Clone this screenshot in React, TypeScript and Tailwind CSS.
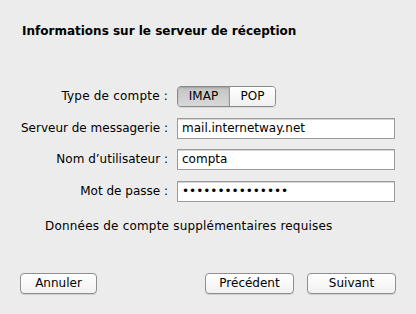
const labelCls = 'text-right leading-[21px] whitespace-nowrap';

function Field({ value }: { value: string }) {
  return (
    <div className="h-[21px] w-[218px] border border-[#9b9b9b] bg-white shadow-[inset_0_1px_0_#d4d4d4] pl-[4px] leading-[19px] whitespace-nowrap overflow-hidden">
      {value}
    </div>
  );
}

function PushButton({ label, width }: { label: string; width: string }) {
  return (
    <button
      type="button"
      className={`${width} h-[21px] rounded-[4px] border border-[#8f8f8f] bg-gradient-to-b from-white to-[#f1f1f1] shadow-[0_1px_0_rgba(0,0,0,0.12)] leading-[19px] text-black`}
    >
      {label}
    </button>
  );
}

export default function App() {
  return (
    <div className="w-[416px] h-[314px] bg-[#ececec] font-['DejaVu_Sans',sans-serif] text-[12px] text-black flex flex-col">
      <p className="pl-[22px] pt-[23px] font-bold text-[12px] leading-[16px]">
        Informations sur le serveur de réception
      </p>

      <div className="mt-[47px] grid grid-cols-[148px_218px] gap-x-[9px] pl-[20px]">
        <span className={`${labelCls} tracking-[0.2px]`}>Type de compte :</span>
        <div className="flex h-[21px] w-[99px] rounded-[4px] border border-[#8a8a8a] overflow-hidden shadow-[0_1px_0_rgba(0,0,0,0.08)]">
          <div className="w-[52px] text-center leading-[19px] bg-gradient-to-b from-[#c4c4c4] to-[#d9d9d9] shadow-[inset_0_1px_2px_rgba(0,0,0,0.2)] border-r border-[#9a9a9a]">
            IMAP
          </div>
          <div className="flex-1 text-center leading-[19px] bg-gradient-to-b from-white to-[#f0f0f0]">POP</div>
        </div>

        <span className={`${labelCls} mt-[11px]`}>Serveur de messagerie :</span>
        <div className="mt-[11px]">
          <Field value="mail.internetway.net" />
        </div>

        <span className={`${labelCls} mt-[10px]`}>Nom d’utilisateur :</span>
        <div className="mt-[10px]">
          <Field value="compta" />
        </div>

        <span className={`${labelCls} mt-[11px]`}>Mot de passe :</span>
        <div className="mt-[11px]">
          <Field value="•••••••••••••••" />
        </div>
      </div>

      <p className="pl-[45px] mt-[16px] leading-[16px] tracking-[0.2px]">
        Données de compte supplémentaires requises
      </p>

      <div className="mt-[39px] flex pl-[20px] pr-[20px]">
        <PushButton label="Annuler" width="w-[77px]" />
        <div className="flex-1" />
        <PushButton label="Précédent" width="w-[89px]" />
        <div className="w-[13px]" />
        <PushButton label="Suivant" width="w-[89px]" />
      </div>
    </div>
  );
}
